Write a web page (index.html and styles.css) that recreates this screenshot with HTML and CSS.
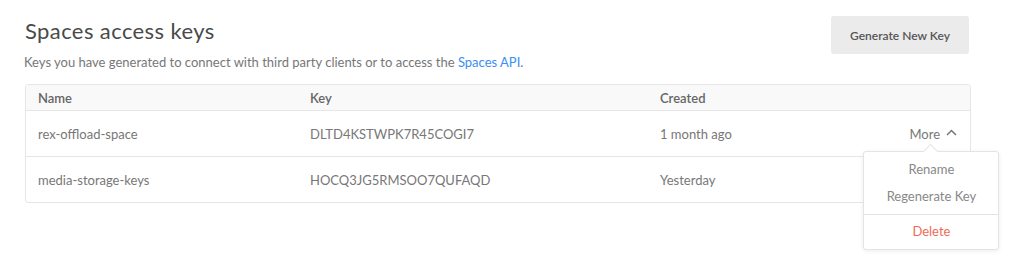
FILE: index.html
```html
<!DOCTYPE html>
<html>
<head>
<meta charset="utf-8">
<link rel="stylesheet" href="styles.css">
</head>
<body>
<div class="page">
  <div class="top">
    <div class="intro">
      <h1 class="title">Spaces access keys</h1>
      <p class="lead">Keys you have generated to connect with third party clients or to access the <a class="link" href="#">Spaces API</a>.</p>
    </div>
    <button class="btn">Generate New Key</button>
  </div>
  <div class="table">
    <div class="row head-row">
      <div class="cell">Name</div>
      <div class="cell">Key</div>
      <div class="cell">Created</div>
      <div class="cell"></div>
    </div>
    <div class="row">
      <div class="cell">rex-offload-space</div>
      <div class="cell">DLTD4KSTWPK7R45COGI7</div>
      <div class="cell">1 month ago</div>
      <div class="cell more-cell">
        <span class="more">More
          <svg class="chev" width="11" height="7" viewBox="0 0 11 7"><polyline points="1,6 5.5,1.5 10,6" fill="none" stroke="#777" stroke-width="1.5"/></svg>
        </span>
        <div class="menu">
          <div class="item">Rename</div>
          <div class="item">Regenerate Key</div>
          <div class="sep"></div>
          <div class="item danger">Delete</div>
        </div>
      </div>
    </div>
    <div class="row last">
      <div class="cell">media-storage-keys</div>
      <div class="cell">HOCQ3JG5RMSOO7QUFAQD</div>
      <div class="cell">Yesterday</div>
      <div class="cell"></div>
    </div>
  </div>
</div>
</body>
</html>
```
FILE: styles.css
```css
* { box-sizing: border-box; }
html, body { min-height: 270px; }
body {
  margin: 0;
  background: #fff;
  font-family: Lato, "Open Sans", sans-serif;
  color: #777;
}
.page {
  padding: 16px 53px 0 25px;
  min-height: 270px;
}
.top {
  display: flex;
  justify-content: space-between;
  align-items: flex-start;
  height: 68px;
}
.title {
  margin: 1px 0 0;
  font-size: 22px;
  line-height: 28px;
  font-weight: 400;
  letter-spacing: 0.4px;
  color: #4a4a4a;
}
.lead {
  margin: 8px 0 0 -1px;
  font-size: 13px;
  line-height: 18px;
  color: #777;
}
.link { color: #3a8ef6; text-decoration: none; }
.btn {
  margin-right: 2px;
  width: 138px;
  height: 38px;
  border: 0;
  border-radius: 3px;
  background: #ebebeb;
  color: #555;
  font-family: inherit;
  font-size: 12px;
  font-weight: 600;
}
.table {
  border: 1px solid #e6e6e6;
  border-radius: 3px;
}
.row {
  display: grid;
  grid-template-columns: 272px 350px 1fr auto;
  align-items: center;
  height: 46px;
  padding: 0 13px 0 12px;
  border-bottom: 1px solid #e6e6e6;
  font-size: 13px;
  color: #777;
}
.row.last { border-bottom: 0; height: 45px; }
.head-row {
  height: 26px;
  background: #f9f9f9;
  color: #666;
  font-weight: 600;
}
.more-cell { position: relative; }
.more {
  display: flex;
  align-items: center;
  gap: 6px;
  font-size: 13px;
  color: #777;
}
.chev { margin-top: -2px; }
.menu {
  position: absolute;
  top: 25px;
  left: -46px;
  width: 136px;
  background: #fff;
  border: 1px solid #e4e4e4;
  border-radius: 3px;
  box-shadow: 0 1px 4px rgba(0,0,0,0.08);
  padding: 4px 0 4px;
  text-align: center;
  z-index: 2;
}
.menu::before {
  content: "";
  position: absolute;
  top: -6px;
  left: 61px;
  width: 10px;
  height: 10px;
  background: #fff;
  border-left: 1px solid #e4e4e4;
  border-top: 1px solid #e4e4e4;
  transform: rotate(45deg);
}
.item {
  font-size: 13px;
  line-height: 27px;
  color: #888;
}
.sep {
  height: 1px;
  background: #e4e4e4;
  margin: 4px 0 3px;
}
.danger { color: #f06a57; }
```
